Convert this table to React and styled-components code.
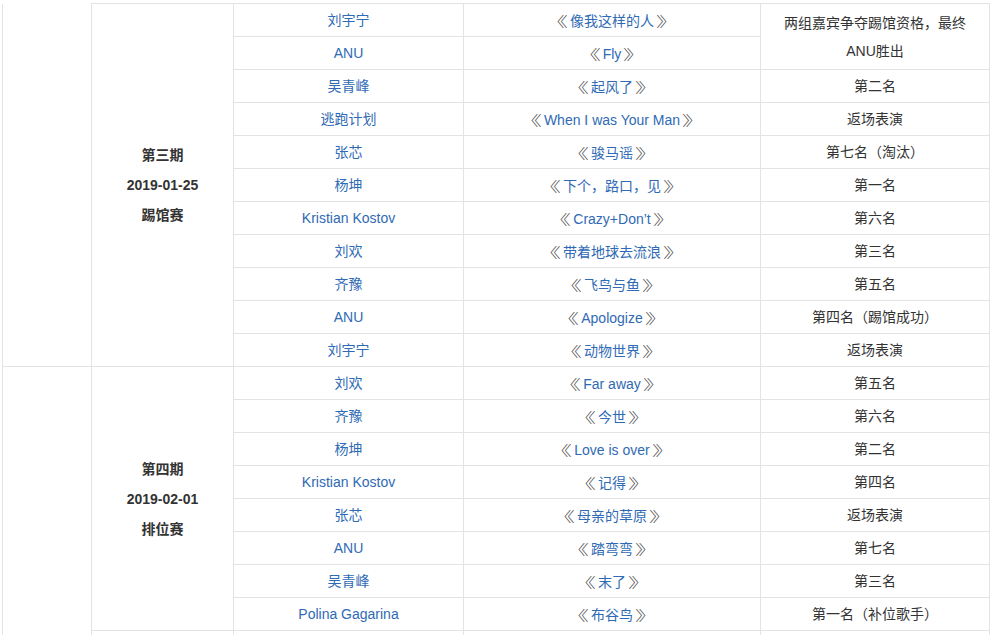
import React from "react";
import styled, { createGlobalStyle } from "styled-components";

const GlobalStyle = createGlobalStyle`
  html, body {
    margin: 0;
    padding: 0;
    background: #fff;
    overflow: hidden;
  }
  body {
    font-family: "Liberation Sans", Arial, "Noto Sans CJK SC", sans-serif;
    font-size: 14px;
    color: #333;
  }
`;

const periods = [
  {
    title: "第三期",
    date: "2019-01-25",
    kind: "踢馆赛",
    rows: [
      { singer: "刘宇宁", song: "像我这样的人", result: ["两组嘉宾争夺踢馆资格，最终", "ANU胜出"], span: 2 },
      { singer: "ANU", song: "Fly", result: null },
      { singer: "吴青峰", song: "起风了", result: "第二名" },
      { singer: "逃跑计划", song: "When I was Your Man", result: "返场表演" },
      { singer: "张芯", song: "骏马谣", result: "第七名（淘汰）" },
      { singer: "杨坤", song: "下个，路口，见", result: "第一名" },
      { singer: "Kristian Kostov", song: "Crazy+Don’t", result: "第六名" },
      { singer: "刘欢", song: "带着地球去流浪", result: "第三名" },
      { singer: "齐豫", song: "飞鸟与鱼", result: "第五名" },
      { singer: "ANU", song: "Apologize", result: "第四名（踢馆成功）" },
      { singer: "刘宇宁", song: "动物世界", result: "返场表演" },
    ],
  },
  {
    title: "第四期",
    date: "2019-02-01",
    kind: "排位赛",
    rows: [
      { singer: "刘欢", song: "Far away", result: "第五名" },
      { singer: "齐豫", song: "今世", result: "第六名" },
      { singer: "杨坤", song: "Love is over", result: "第二名" },
      { singer: "Kristian Kostov", song: "记得", result: "第四名" },
      { singer: "张芯", song: "母亲的草原", result: "返场表演" },
      { singer: "ANU", song: "踏弯弯", result: "第七名" },
      { singer: "吴青峰", song: "末了", result: "第三名" },
      { singer: "Polina Gagarina", song: "布谷鸟", result: "第一名（补位歌手）" },
    ],
    extra: true,
  },
];

function App() {
  return (
    <>
      <GlobalStyle />
      <Page>
        <Table>
          <colgroup>
            <col style={{ width: 89 }} />
            <col style={{ width: 142 }} />
            <col style={{ width: 230 }} />
            <col style={{ width: 297 }} />
            <col style={{ width: 229 }} />
          </colgroup>
          <tbody>
            {periods.map((p, pi) =>
              p.rows.map((r, ri) => (
                <tr key={pi + "-" + ri}>
                  {ri === 0 && (
                    <SideCell
                      rowSpan={p.rows.length + (p.extra ? 1 : 0)}
                      $noTop={pi === 0}
                    />
                  )}
                  {ri === 0 && (
                    <PeriodCell rowSpan={p.rows.length}>
                      <div>{p.title}</div>
                      <div>{p.date}</div>
                      <div>{p.kind}</div>
                    </PeriodCell>
                  )}
                  <Cell>
                    <Link>{r.singer}</Link>
                  </Cell>
                  <Cell>
                    <Bracket $side="left">《</Bracket>
                    <Link>{r.song}</Link>
                    <Bracket $side="right">》</Bracket>
                  </Cell>
                  {r.result !== null &&
                    (Array.isArray(r.result) ? (
                      <NoteCell rowSpan={r.span}>
                        {r.result[0]}
                        <br />
                        {r.result[1]}
                      </NoteCell>
                    ) : (
                      <Cell>{r.result}</Cell>
                    ))}
                </tr>
              ))
            )}
            <tr>
              <Cell>&nbsp;</Cell>
              <Cell>&nbsp;</Cell>
              <Cell>&nbsp;</Cell>
              <Cell>&nbsp;</Cell>
            </tr>
          </tbody>
        </Table>
      </Page>
    </>
  );
}

export default App;

const Page = styled.div`
  padding: 3px 0 0 2px;
`;

const Table = styled.table`
  width: 987px;
  table-layout: fixed;
  border-collapse: collapse;
  border-spacing: 0;
`;

const Cell = styled.td`
  border: 1px solid #e3e3e3;
  height: 33px;
  padding: 0 8px;
  box-sizing: border-box;
  text-align: center;
  vertical-align: middle;
  line-height: 20px;
  color: #333;
  white-space: nowrap;
`;

const SideCell = styled(Cell)`
  border-top: ${(p) => (p.$noTop ? "none" : "1px solid #e3e3e3")};
`;

const PeriodCell = styled(Cell)`
  font-weight: bold;
  line-height: 30px;
  color: #333;
`;

const NoteCell = styled(Cell)`
  line-height: 28px;
  white-space: normal;
`;

const Bracket = styled.span`
  display: inline-block;
  font-family: "Noto Sans CJK SC", sans-serif;
  font-weight: 300;
  color: #555;
  transform: scaleX(1.6);
  transform-origin: ${(p) => (p.$side === "left" ? "right" : "left")} center;
  margin: ${(p) => (p.$side === "left" ? "0 2px 0 2px" : "0 2px 0 2px")};
`;

const Link = styled.a`
  color: #2f6ab5;
  text-decoration: none;
  cursor: pointer;
`;
